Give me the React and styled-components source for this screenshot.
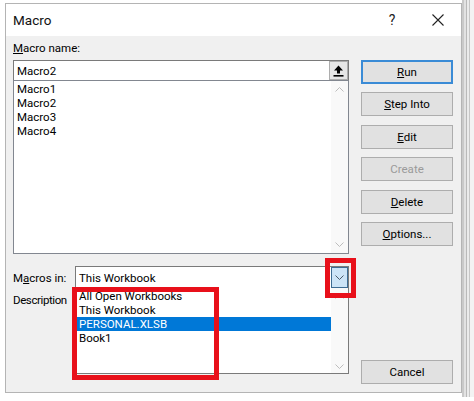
import styled, { createGlobalStyle } from "styled-components";

const GlobalStyle = createGlobalStyle`
  html, body {
    margin: 0;
    padding: 0;
    background: #fff;
  }
  body {
    font-family: Roboto, "Liberation Sans", sans-serif;
    color: #000;
  }
`;

const Page = styled.div`
  display: flex;
  width: 474px;
  height: 401px;
  overflow: hidden;
  background: #fff;
`;

const Dialog = styled.div`
  position: relative;
  width: 457px;
  height: 390px;
  margin: 3px 0 0 5px;
  box-sizing: border-box;
  border: 1px solid #b4b4b4;
  background: #f0f0f0;
  display: flex;
  flex-direction: column;
`;

const SheetEdge = styled.div`
  flex: 1;
  height: 397px;
  background: linear-gradient(
    90deg,
    #c9c9c9 0 2px,
    #e2e2e2 2px 4px,
    #b9b9b9 4px 5px,
    #ebebeb 5px 7px,
    #c6c6c6 7px 8px,
    #f3f3f3 8px
  );
`;

const TitleBar = styled.div`
  height: 32px;
  flex: none;
  background: #fff;
  display: flex;
  align-items: center;
  padding-left: 7px;
`;

const Title = styled.span`
  flex: 1;
  font-size: 13.5px;
  color: #111;
`;

const TitleButton = styled.span`
  width: 46px;
  height: 32px;
  display: flex;
  align-items: center;
  justify-content: center;
  font-size: 14px;
  color: #222;
`;

const Body = styled.div`
  flex: 1;
  display: flex;
  gap: 12px;
  padding: 4px 8px 8px 7px;
`;

const LeftColumn = styled.div`
  width: 336px;
  display: flex;
  flex-direction: column;
`;

const Label = styled.div`
  font-size: 11.5px;
  line-height: 16px;
  height: 16px;
  white-space: nowrap;
  margin-top: ${(p) => p.$gap || 0}px;
  letter-spacing: ${(p) => p.$tight || 0}px;
`;

const NameInput = styled.div`
  margin-top: 4px;
  height: 21px;
  box-sizing: border-box;
  border: 1px solid #7a7a7a;
  background: #fff;
  display: flex;
  align-items: center;
  font-size: 11.5px;
  padding-left: 3px;
`;

const NameText = styled.span`
  flex: 1;
`;

const UploadButton = styled.span`
  width: 19px;
  height: 19px;
  box-sizing: border-box;
  background: #e6e6e6;
  border: 1px solid #adadad;
  display: flex;
  align-items: center;
  justify-content: center;
`;

const ListBox = styled.div`
  margin-top: -1px;
  height: 174px;
  box-sizing: border-box;
  border: 1px solid #828790;
  background: #fff;
  display: flex;
`;

const Items = styled.div`
  flex: 1;
  padding-top: 1px;
  font-size: 11.5px;
  line-height: 14px;
`;

const Item = styled.div`
  height: 14px;
  padding-left: ${(p) => p.$indent || 3}px;
  margin-left: ${(p) => p.$inset || 0}px;
  background: ${(p) => (p.$selected ? "#0078d7" : "transparent")};
  color: ${(p) => (p.$selected ? "#fff" : "#000")};
  white-space: nowrap;
`;

const ScrollBar = styled.div`
  width: 17px;
  background: #f9f9f9;
  display: flex;
  flex-direction: column;
  justify-content: space-between;
  align-items: center;
  padding: 6px 0;
`;

const MacrosRow = styled.div`
  margin-top: 12px;
  display: flex;
  align-items: center;
`;

const RowLabel = styled(Label)`
  width: 62px;
`;

const Combo = styled.div`
  position: relative;
  flex: 1;
  height: 23px;
  box-sizing: border-box;
  border: 1px solid #7a7a7a;
  background: #fff;
  display: flex;
  align-items: center;
  font-size: 11.5px;
  padding-left: 3px;
`;

const ComboText = styled.span`
  flex: 1;
`;

const ComboButton = styled.span`
  width: 17px;
  height: 21px;
  box-sizing: border-box;
  background: #cce4f7;
  border: 1px solid #3d6c93;
  display: flex;
  align-items: center;
  justify-content: center;
`;

const DropList = styled.div`
  position: absolute;
  top: 100%;
  left: -1px;
  right: -1px;
  height: 86px;
  box-sizing: border-box;
  border: 1px solid #7a7a7a;
  border-top: none;
  background: #fff;
  display: flex;
  z-index: 2;
`;

const DropScroll = styled(ScrollBar)`
  padding: 6px 0 4px;
`;

const Highlight = styled.div`
  position: absolute;
  left: ${(p) => p.$x}px;
  top: ${(p) => p.$y}px;
  width: ${(p) => p.$w}px;
  height: ${(p) => p.$h}px;
  box-sizing: border-box;
  border: 5px solid #e8101a;
  z-index: 3;
`;

const RightColumn = styled.div`
  width: 92px;
  display: flex;
  flex-direction: column;
  gap: 8.4px;
  padding-top: 20px;
`;

const Button = styled.div`
  height: 24px;
  box-sizing: border-box;
  background: #e1e1e1;
  border: ${(p) => (p.$default ? "2px solid #3a8bd6" : "1px solid #adadad")};
  display: flex;
  align-items: center;
  justify-content: center;
  font-size: 11.5px;
  color: ${(p) => (p.$disabled ? "#9a9a9a" : "#000")};
  ${(p) => p.$bottom && "margin-top: auto;"}
`;

const Chevron = ({ up, color = "#bdbdbd" }) => (
  <svg width="9" height="5" viewBox="0 0 9 5">
    <polyline
      points={up ? "0.5,4.5 4.5,0.5 8.5,4.5" : "0.5,0.5 4.5,4.5 8.5,0.5"}
      fill="none"
      stroke={color}
      strokeWidth="1"
    />
  </svg>
);

const UploadIcon = () => (
  <svg width="11" height="12" viewBox="0 0 11 12">
    <path d="M5.5 0.5 L10 5.5 H7 V8.5 H4 V5.5 H1 Z" fill="#000" />
    <rect x="0.5" y="10" width="10" height="1.6" fill="#000" />
  </svg>
);

const CloseIcon = () => (
  <svg width="12" height="12" viewBox="0 0 12 12">
    <path d="M0.5 0.5 L11.5 11.5 M11.5 0.5 L0.5 11.5" stroke="#222" strokeWidth="1.1" />
  </svg>
);

const macros = ["Macro1", "Macro2", "Macro3", "Macro4"];
const workbooks = ["All Open Workbooks", "This Workbook", "PERSONAL.XLSB", "Book1"];

export default function App() {
  return (
    <>
      <GlobalStyle />
      <Page>
        <Dialog>
          <TitleBar>
            <Title>Macro</Title>
            <TitleButton>?</TitleButton>
            <TitleButton>
              <CloseIcon />
            </TitleButton>
          </TitleBar>
          <Body>
            <LeftColumn>
              <Label>
                <u>M</u>acro name:
              </Label>
              <NameInput>
                <NameText>Macro2</NameText>
                <UploadButton>
                  <UploadIcon />
                </UploadButton>
              </NameInput>
              <ListBox>
                <Items>
                  {macros.map((m) => (
                    <Item key={m}>{m}</Item>
                  ))}
                </Items>
                <ScrollBar>
                  <Chevron up />
                  <Chevron />
                </ScrollBar>
              </ListBox>
              <MacrosRow>
                <RowLabel>
                  M<u>a</u>cros in:
                </RowLabel>
                <Combo>
                  <ComboText>This Workbook</ComboText>
                  <ComboButton>
                    <Chevron color="#4a5a6a" />
                  </ComboButton>
                  <DropList>
                    <Items>
                      {workbooks.map((w) => (
                        <Item
                          key={w}
                          $indent={2}
                          $inset={1}
                          $selected={w === "PERSONAL.XLSB"}
                        >
                          {w}
                        </Item>
                      ))}
                    </Items>
                    <DropScroll>
                      <Chevron up />
                      <Chevron />
                    </DropScroll>
                  </DropList>
                  <Highlight $x={-4} $y={20} $w={147} $h={93} />
                  <Highlight $x={249} $y={-9} $w={31} $h={40} />
                </Combo>
              </MacrosRow>
              <Label $gap={3} $tight={-0.4}>
                Description
              </Label>
            </LeftColumn>
            <RightColumn>
              <Button $default>
                <span>
                  <u>R</u>un
                </span>
              </Button>
              <Button>
                <span>
                  <u>S</u>tep Into
                </span>
              </Button>
              <Button>
                <span>
                  <u>E</u>dit
                </span>
              </Button>
              <Button $disabled>Create</Button>
              <Button>
                <span>
                  <u>D</u>elete
                </span>
              </Button>
              <Button>
                <span>
                  <u>O</u>ptions...
                </span>
              </Button>
              <Button $bottom>Cancel</Button>
            </RightColumn>
          </Body>
        </Dialog>
        <SheetEdge />
      </Page>
    </>
  );
}
